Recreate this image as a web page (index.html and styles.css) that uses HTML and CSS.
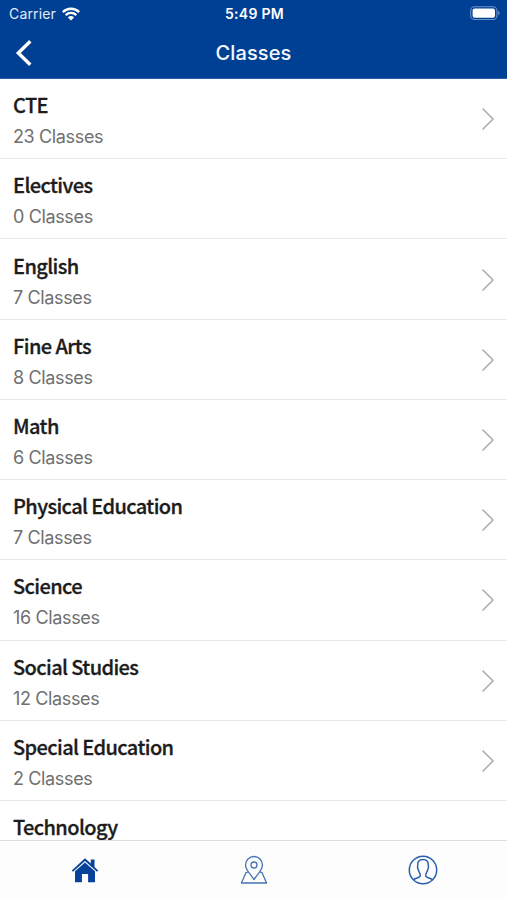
FILE: index.html
```
<!DOCTYPE html>
<html lang="en">
<head>
<meta charset="utf-8">
<title>Classes</title>
<link rel="stylesheet" href="styles.css">
</head>
<body>
<div class="app">
  <header class="header">
    <div class="status">
      <div class="carrier">
        <span>Carrier</span>
        <svg class="wifi" viewBox="0 0 18 14" width="18" height="14"><g fill="none" stroke="#fff" stroke-width="2.3"><path d="M.8 5.1a11.7 11.7 0 0 1 16.4 0"/><path d="M3.7 8.1a7.6 7.6 0 0 1 10.6 0"/></g><path d="M5.9 10.4a4.4 4.4 0 0 1 6.2 0L9 13.5z" fill="#fff"/></svg>
      </div>
      <span class="time">5:49 PM</span>
      <svg class="battery" viewBox="0 0 30 15" width="30" height="15"><rect x=".7" y=".7" width="26.2" height="12.8" rx="3.8" fill="none" stroke="#6b91c8" stroke-width="1.1"/><rect x="2.6" y="2.5" width="22.4" height="9.2" rx="2" fill="#fff"/><path d="M28.2 4.8q3 2.2 0 4.6z" fill="#6b91c8"/></svg>
    </div>
    <div class="nav">
      <svg class="back" viewBox="0 0 18 28" width="18" height="28"><path d="M15.3 2.2 3.3 14l12 11.8" fill="none" stroke="#fff" stroke-width="3.4"/></svg>
      <h1 class="heading">Classes</h1>
    </div>
  </header>
  <main class="list">
    <div class="row"><div class="text"><h2 class="name">CTE</h2><p class="count">23 Classes</p></div><svg class="chevron" viewBox="0 0 14 24"><path d="m1.5 1.5 10.5 10.5L1.5 22.5"/></svg></div>
    <div class="row"><div class="text"><h2 class="name">Electives</h2><p class="count">0 Classes</p></div></div>
    <div class="row"><div class="text"><h2 class="name">English</h2><p class="count">7 Classes</p></div><svg class="chevron" viewBox="0 0 14 24"><path d="m1.5 1.5 10.5 10.5L1.5 22.5"/></svg></div>
    <div class="row"><div class="text"><h2 class="name">Fine Arts</h2><p class="count">8 Classes</p></div><svg class="chevron" viewBox="0 0 14 24"><path d="m1.5 1.5 10.5 10.5L1.5 22.5"/></svg></div>
    <div class="row"><div class="text"><h2 class="name">Math</h2><p class="count">6 Classes</p></div><svg class="chevron" viewBox="0 0 14 24"><path d="m1.5 1.5 10.5 10.5L1.5 22.5"/></svg></div>
    <div class="row"><div class="text"><h2 class="name">Physical Education</h2><p class="count">7 Classes</p></div><svg class="chevron" viewBox="0 0 14 24"><path d="m1.5 1.5 10.5 10.5L1.5 22.5"/></svg></div>
    <div class="row"><div class="text"><h2 class="name">Science</h2><p class="count">16 Classes</p></div><svg class="chevron" viewBox="0 0 14 24"><path d="m1.5 1.5 10.5 10.5L1.5 22.5"/></svg></div>
    <div class="row"><div class="text"><h2 class="name">Social Studies</h2><p class="count">12 Classes</p></div><svg class="chevron" viewBox="0 0 14 24"><path d="m1.5 1.5 10.5 10.5L1.5 22.5"/></svg></div>
    <div class="row"><div class="text"><h2 class="name">Special Education</h2><p class="count">2 Classes</p></div><svg class="chevron" viewBox="0 0 14 24"><path d="m1.5 1.5 10.5 10.5L1.5 22.5"/></svg></div>
    <div class="row"><div class="text"><h2 class="name">Technology</h2></div></div>
  </main>
  <nav class="tabs">
    <div class="tab"><svg viewBox="0 0 28 26" width="28" height="26"><path d="M.8 13.4 14 1.2l5.8 5.4V2.4h3.7v7.6l3.7 3.4-1.2 1.3L14 3.9 2 14.7z" fill="#07429a"/><path d="M4 14.3 14 5.4l10 8.9v11h-6.9v-8.2h-6.2v8.2H4z" fill="#07429a"/></svg></div>
    <div class="tab"><svg viewBox="0 0 28 30" width="28" height="30"><g fill="none" stroke="#4673b3" stroke-width="1.3" stroke-linejoin="round"><path d="M14 24.6C12 20.6 5.5 15.5 5.5 10a8.5 8.5 0 0 1 17 0c0 5.500-6.500 10.600-8.500 14.600z"/><circle cx="14" cy="10" r="3"/><path d="M7.800 17.300H6.200L1.400 28h25.200l-4.800-10.700h-1.600"/></g></svg></div>
    <div class="tab"><svg viewBox="0 0 30 30" width="30" height="30"><g fill="none" stroke="#2b61ac" stroke-width="1.5"><circle cx="15" cy="15" r="13.7"/><path d="M5.2 24.8c2.2-1.7 6.1-1.7 7-3.7.5-1.8-.2-2.7-1.1-4.2-.7-1.2-.8-2.2-1.2-3.2-.8-1.5-.4-2.7-.1-3.8-.4-3.2 1.5-5.3 5.2-5.3s5.6 2.1 5.2 5.3c.3 1.1.7 2.3-.1 3.8-.4 1-.5 2-1.2 3.2-.9 1.5-1.6 2.4-1.1 4.2.9 2 4.8 2 7 3.7"/></g></svg></div>
  </nav>
</div>
</body>
</html>
```

FILE: styles.css
```
* { box-sizing: border-box; }

body {
  margin: 0;
  background: #fff;
  font-family: Inter, "Liberation Sans", sans-serif;
}

h1, h2, p { margin: 0; }
svg { display: block; flex: none; }

.app {
  display: flex;
  flex-direction: column;
  height: 900px;
  overflow: hidden;
}

.header {
  flex: none;
  height: 79px;
  background: #004094;
  border-bottom: 1px solid #2d64ac;
  color: #fff;
}

.status {
  display: grid;
  grid-template-columns: 1fr auto 1fr;
  align-items: center;
  height: 27px;
  padding: 0 7px 0 9px;
}

.carrier {
  display: flex;
  align-items: center;
  gap: 6px;
  font-size: 14px;
  letter-spacing: 0.15px;
  color: #e3ebf6;
}

.time {
  font-size: 14px;
  font-weight: 600;
  letter-spacing: 0.3px;
}

.battery { justify-self: end; }

.nav {
  display: grid;
  grid-template-columns: 1fr auto 1fr;
  align-items: center;
  height: 51px;
  padding: 0 15px;
}

.heading {
  font-size: 20px;
  font-weight: 500;
  line-height: 26px;
  letter-spacing: 0.1px;
  color: #f4f8fd;
}

.list {
  flex: 1;
  min-height: 0;
  overflow: hidden;
}

.row {
  display: flex;
  align-items: center;
  justify-content: space-between;
  height: 80.22px;
  padding: 1px 12px 0 13px;
  border-bottom: 1px solid #e9e9e9;
}

.text { padding-top: 3px; }

.row:last-child { align-items: flex-start; padding-top: 8px; }

.name {
  font-family: "Noto Sans CJK SC", "Noto Sans", sans-serif;
  font-size: 20px;
  font-weight: 500;
  line-height: 30px;
  letter-spacing: -0.6px;
  color: #1c1c1c;
  -webkit-text-stroke: 0.3px #1c1c1c;
}

.count {
  margin-top: 3px;
  font-size: 18px;
  line-height: 28px;
  letter-spacing: -0.36px;
  color: #707070;
}

.chevron {
  width: 14px;
  height: 24px;
  fill: none;
  stroke: #a9aeb3;
  stroke-width: 1.5;
}

.tabs {
  display: grid;
  grid-template-columns: repeat(3, 1fr);
  flex: none;
  height: 60px;
  padding-bottom: 1px;
  background: #fdfdfd;
  border-top: 1px solid #dedede;
}

.tab {
  display: flex;
  align-items: center;
  justify-content: center;
}
```
